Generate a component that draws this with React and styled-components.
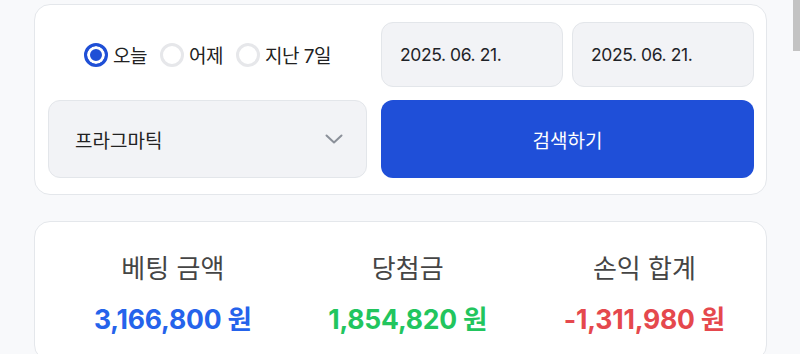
import React, { useState } from 'react'
import styled, { createGlobalStyle } from 'styled-components'

const GlobalStyle = createGlobalStyle`
    html, body {
        margin: 0;
        padding: 0;
        background: #f8f9fb;
        font-family: Inter, "Noto Sans CJK KR", "Noto Sans", sans-serif;
    }
    * { box-sizing: border-box; }
`;

const periods = ['오늘', '어제', '지난 7일']

const stats = [
    { label: '베팅 금액', value: '3,166,800', tone: '#2563eb' },
    { label: '당첨금', value: '1,854,820', tone: '#22c55e' },
    { label: '손익 합계', value: '-1,311,980', tone: '#e5484d' },
]

function App() {
    const [period, setPeriod] = useState('오늘')
    return (
        <Page>
            <GlobalStyle />
            <ScrollThumb />
            <FilterCard>
                <RadioGroup>
                    {periods.map((p) => (
                        <RadioItem key={p} onClick={() => setPeriod(p)}>
                            <RadioDot checked={period === p} />
                            <RadioText>{p}</RadioText>
                        </RadioItem>
                    ))}
                </RadioGroup>
                <DateRow>
                    <DateBox>2025. 06. 21.</DateBox>
                    <DateBox>2025. 06. 21.</DateBox>
                </DateRow>
                <SelectBox>
                    <span>프라그마틱</span>
                    <svg width="18" height="10" viewBox="0 0 18 10" fill="none">
                        <path d="M1.5 1.5L9 8.5L16.5 1.5" stroke="#8b9099" strokeWidth="2" strokeLinecap="round" strokeLinejoin="round" />
                    </svg>
                </SelectBox>
                <SearchButton>검색하기</SearchButton>
            </FilterCard>
            <SummaryCard>
                {stats.map((s) => (
                    <Stat key={s.label}>
                        <StatLabel>{s.label}</StatLabel>
                        <StatValue tone={s.tone}>{s.value} 원</StatValue>
                    </Stat>
                ))}
            </SummaryCard>
        </Page>
    )
}

const Page = styled.div`
    padding: 4px 33px 40px 34px;
    display: flex;
    flex-direction: column;
    gap: 26px;
`;

// fake overlay scrollbar thumb seen at the right edge
const ScrollThumb = styled.div`
    position: fixed;
    top: 0;
    right: 0;
    width: 7px;
    height: 51px;
    background: #c3c3c3;
`;

const FilterCard = styled.div`
    background: #fff;
    border: 1px solid #e4e7eb;
    border-radius: 16px;
    padding: 17px 12px 16px 13px;
    display: grid;
    grid-template-columns: 319px 1fr;
    grid-template-rows: 65px 78px;
    column-gap: 14px;
    row-gap: 13px;
`;

const RadioGroup = styled.div`
    display: flex;
    align-items: center;
    justify-content: center;
    gap: 13px;
`;

const RadioItem = styled.label`
    display: flex;
    align-items: center;
    gap: 5px;
    cursor: pointer;
`;

const RadioDot = styled.span`
    width: 24px;
    height: 24px;
    border-radius: 50%;
    border: ${({ checked }) => (checked ? '3px solid #1f4fd6' : '3px solid #e6e7ea')};
    background: ${({ checked }) => (checked ? '#1f4fd6' : '#fff')};
    box-shadow: ${({ checked }) => (checked ? 'inset 0 0 0 3px #fff' : 'none')};
`;

const RadioText = styled.span`
    font-size: 19px;
    color: #222;
    letter-spacing: -0.5px;
`;

const DateRow = styled.div`
    display: grid;
    grid-template-columns: 1fr 1fr;
    gap: 9px;
`;

const DateBox = styled.div`
    background: #f2f3f6;
    border: 1px solid #e3e6ea;
    border-radius: 12px;
    display: flex;
    align-items: center;
    padding-left: 18px;
    font-size: 17.5px;
    color: #1f2328;
    letter-spacing: -0.4px;
`;

const SelectBox = styled.div`
    background: #f2f3f6;
    border: 1px solid #e3e6ea;
    border-radius: 12px;
    display: flex;
    align-items: center;
    justify-content: space-between;
    padding: 0 23px 0 26px;
    font-size: 19px;
    color: #222;
`;

const SearchButton = styled.button`
    background: #1f4fd8;
    border: none;
    border-radius: 12px;
    color: #fff;
    font-family: inherit;
    font-size: 19px;
    cursor: pointer;
`;

const SummaryCard = styled.div`
    background: #fff;
    border: 1px solid #e4e7eb;
    border-radius: 16px;
    padding: 29px 41px 24px 59px;
    display: flex;
    justify-content: space-between;
`;

const Stat = styled.div`
    display: flex;
    flex-direction: column;
    align-items: center;
    gap: 16px;
`;

const StatLabel = styled.div`
    font-size: 26px;
    line-height: 35px;
    font-weight: 400;
    color: #454545;
`;

const StatValue = styled.div`
    font-size: 26.5px;
    line-height: 34px;
    font-weight: 700;
    color: ${({ tone }) => tone};
    letter-spacing: -0.2px;
`;

export default App
